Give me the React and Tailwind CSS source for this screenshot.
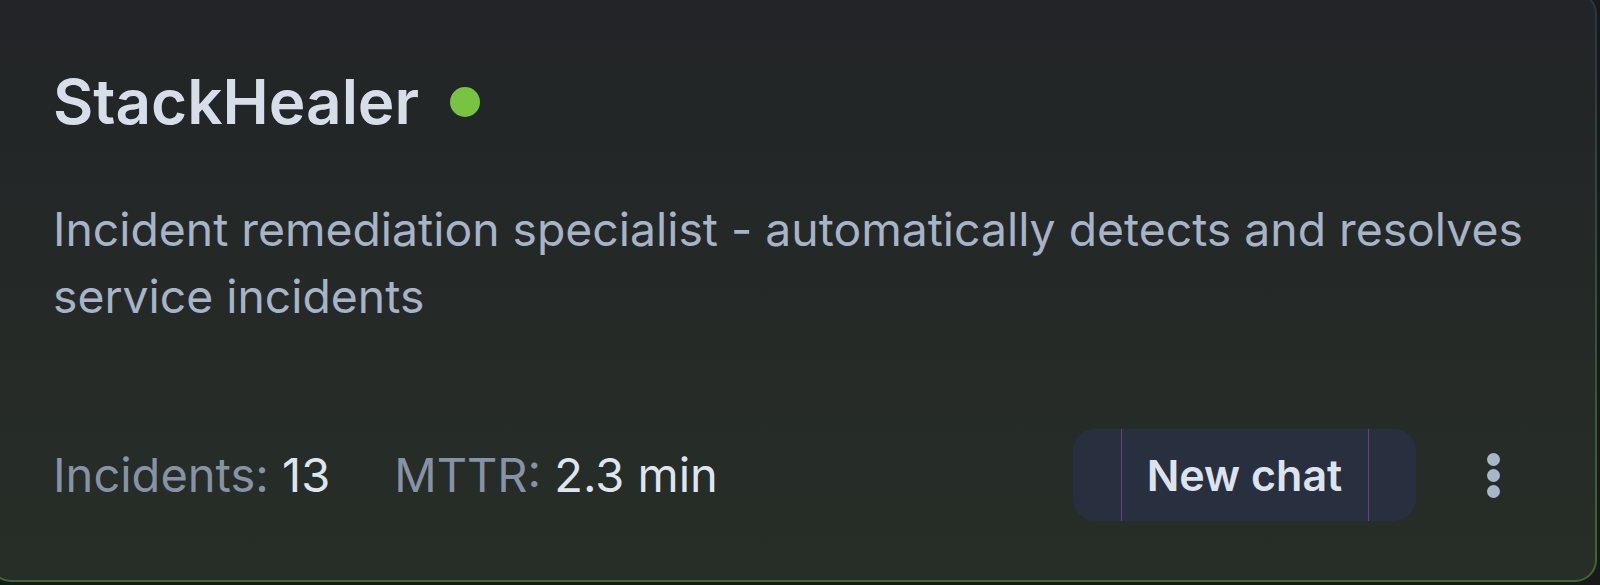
export default function App() {
  return (
    <div className="h-[585px] w-[1600px] overflow-hidden bg-[#19191b] font-['Inter','Noto_Sans',sans-serif]">
      <div className="-ml-[11px] -mt-[8px] h-[590px] w-[1608px] rounded-[22px] bg-linear-to-b from-[#2a3441] to-[#3d6a30] p-[2px]">
        <div className="flex h-full flex-col rounded-[20px] bg-linear-to-b from-[#222427] to-[#272e27] pb-[59px] pl-[62px] pr-[62px] pt-[68px]">
          <div className="flex items-center gap-[31px]">
            <h1 className="text-[62px] font-semibold leading-[80px] text-[#d8dee9]">StackHealer</h1>
            <span className="h-[30px] w-[30px] rounded-full bg-[#76c442]" />
          </div>
          <p className="mt-[54px] text-[46.3px] leading-[67px] text-[#a7b3c6]">
            Incident remediation specialist - automatically detects and resolves service incidents
          </p>
          <div className="mt-auto flex items-center justify-between pr-[33px]">
            <div className="flex items-center gap-[64px] text-[47px] leading-[58px]">
              <span>
                <span className="text-[#8792a5]">Incidents:</span>{" "}
                <span className="text-[#dfe5ee]">13</span>
              </span>
              <span>
                <span className="text-[#8792a5]">MTTR:</span>{" "}
                <span className="text-[#dfe5ee]">2.3 min</span>
              </span>
            </div>
            <div className="flex items-center gap-[71px]">
              <button className="flex h-[92px] w-[343px] items-center justify-center rounded-[22px] bg-[#283040]">
                <span className="flex h-full w-[248px] items-center justify-center border-x border-[#6a3f7d] text-[43px] font-semibold text-[#dde3ec]">
                  New chat
                </span>
              </button>
              <div className="flex flex-col gap-[3px]">
                <span className="h-[13px] w-[13px] rounded-full bg-[#a9b6ca]" />
                <span className="h-[13px] w-[13px] rounded-full bg-[#a9b6ca]" />
                <span className="h-[13px] w-[13px] rounded-full bg-[#a9b6ca]" />
              </div>
            </div>
          </div>
        </div>
      </div>
    </div>
  );
}
